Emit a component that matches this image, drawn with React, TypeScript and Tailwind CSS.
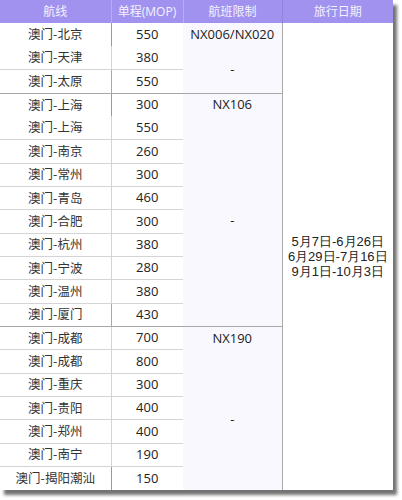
import React from "react";

const rows: [string, string][] = [
  ["澳门-北京", "550"],
  ["澳门-天津", "380"],
  ["澳门-太原", "550"],
  ["澳门-上海", "300"],
  ["澳门-上海", "550"],
  ["澳门-南京", "260"],
  ["澳门-常州", "300"],
  ["澳门-青岛", "460"],
  ["澳门-合肥", "300"],
  ["澳门-杭州", "380"],
  ["澳门-宁波", "280"],
  ["澳门-温州", "380"],
  ["澳门-厦门", "430"],
  ["澳门-成都", "700"],
  ["澳门-成都", "800"],
  ["澳门-重庆", "300"],
  ["澳门-贵阳", "400"],
  ["澳门-郑州", "400"],
  ["澳门-南宁", "190"],
  ["澳门-揭阳潮汕", "150"],
];

// col3 cells: start row index -> [span, text, bottom line]
const col3: Record<number, [number, string, boolean]> = {
  0: [1, "NX006/NX020", false],
  1: [2, "-", true],
  3: [1, "NX106", false],
  4: [9, "-", true],
  13: [1, "NX190", false],
  14: [6, "-", false],
};

const groupEnds = new Set([2, 12]);
const noLineAfter = new Set([0, 3]);

export default function App() {
  return (
    <div
      className="w-[402px] h-[500px] bg-white"
      style={{ fontFamily: '"Segoe UI", "Open Sans", "Noto Sans CJK SC", sans-serif' }}
    >
      <table className="border-collapse w-[393px] table-fixed bg-white shadow-[4px_5px_3px_rgba(0,0,0,0.55)] text-[13px] text-[#222]">
        <colgroup>
          <col className="w-[111px]" />
          <col className="w-[72px]" />
          <col className="w-[99px]" />
          <col className="w-[111px]" />
        </colgroup>
        <thead>
          <tr className="h-[23px] bg-[#a092ee] text-[#f4f2ff] text-[12px]">
            <th className="font-normal border-r border-[#b8adf4] text-center p-0">航线</th>
            <th className="font-normal border-r border-[#b8adf4] text-center p-0">单程(MOP)</th>
            <th className="font-normal border-r border-[#8f84d8] text-center p-0">航班限制</th>
            <th className="font-normal text-center p-0">旅行日期</th>
          </tr>
        </thead>
        <tbody>
          {rows.map(([route, price], i) => {
            const last = i === rows.length - 1;
            const lineCls = last
              ? ""
              : noLineAfter.has(i)
              ? ""
              : groupEnds.has(i)
              ? "border-b border-[#a8a8a8]"
              : "border-b border-[#d4d4d4]";
            const c3 = col3[i];
            return (
              <tr key={i} className="h-[23.35px]">
                <td
                  className={`p-0 text-center whitespace-nowrap border-r border-[#9a9a9a] text-[#333] ${lineCls}`}
                  style={{ fontFamily: '"Noto Sans CJK SC", sans-serif', fontSize: "12.5px" }}
                >
                  {route}
                </td>
                <td className={`p-0 text-center ${lineCls}`}>{price}</td>
                {c3 && (
                  <td
                    rowSpan={c3[0]}
                    className={`p-0 text-center bg-[#f8f8fe] border-r border-[#a8a8a8] ${
                      c3[2] ? "border-b border-[#a8a8a8]" : ""
                    }`}
                  >
                    {c3[1]}
                  </td>
                )}
                {i === 0 && (
                  <td
                    rowSpan={rows.length}
                    className="p-0 text-center leading-[15px] text-[13px] font-['Liberation_Sans',sans-serif]"
                  >
                    <div>5月7日-6月26日</div>
                    <div>6月29日-7月16日</div>
                    <div>9月1日-10月3日</div>
                  </td>
                )}
              </tr>
            );
          })}
        </tbody>
      </table>
    </div>
  );
}
